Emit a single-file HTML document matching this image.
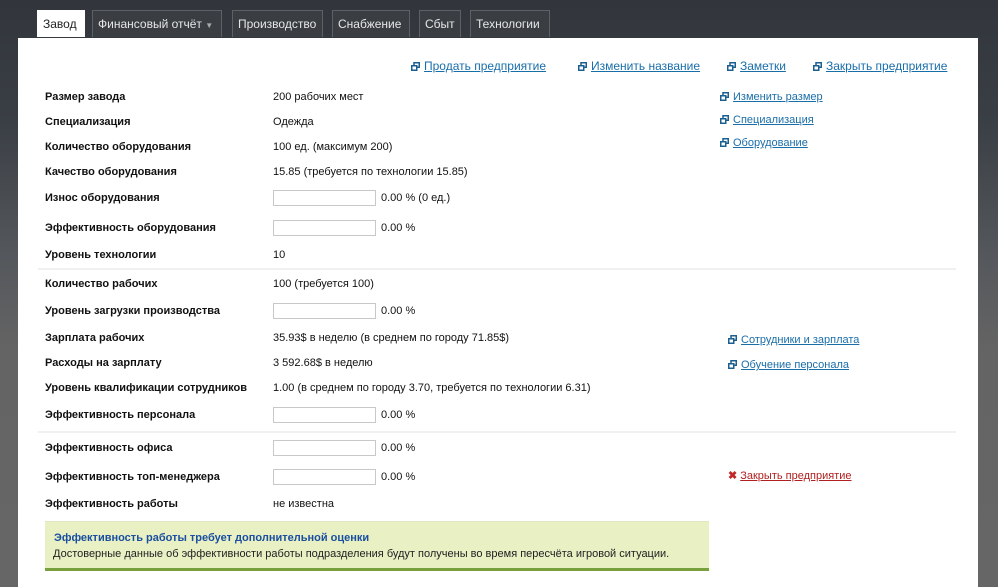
<!DOCTYPE html><html><head><meta charset="utf-8"><style>
html{background:#666}
body{margin:0;width:998px;height:587px;overflow:hidden;background:linear-gradient(#32363c 0,#3a3f45 120px,#55585c 260px,#646464 350px,#666 587px);font-family:"Liberation Sans",sans-serif;font-size:11px;color:#111;position:relative}
.tab{position:absolute;top:10px;height:27px;line-height:27px;border:1px solid #5c6166;border-bottom:none;color:#e6e6e6;font-size:12px;padding:0 5px;box-sizing:border-box;background:#3a3e43}
.tab.a{background:#fff;color:#222;border-color:#fff}
.panel{position:absolute;left:18px;top:38px;width:960px;height:549px;background:#fff}
.t{position:absolute;white-space:nowrap}
.l{font-weight:bold;left:45px}
.v{left:273px}
.in{position:absolute;left:273px;width:103px;height:16px;border:1px solid #c8c8c8;box-sizing:border-box;background:#fff}
a{color:#1a6ea8;text-decoration:underline}
.ic{display:inline-block;width:9px;height:9px;margin-right:4px;vertical-align:-1px}
.sep{position:absolute;left:38px;width:918px;height:2px;background:#f0f0f0}
</style></head><body>
<svg width="0" height="0" style="position:absolute"><symbol id="w" viewBox="0 0 9 9"><rect x="3" y="0.75" width="5.25" height="4.5" fill="none" stroke="#1a5f8f" stroke-width="1.5"/><rect x="0.75" y="3.75" width="5" height="4.5" fill="#fff" stroke="#1a5f8f" stroke-width="1.5"/></symbol></svg>
<div class="tab a" style="left:37px;width:48px">Завод</div>
<div class="tab" style="left:92px;width:130px">Финансовый отчёт <span style="font-size:8px;color:#aaa">▼</span></div>
<div class="tab" style="left:232px;width:91px">Производство</div>
<div class="tab" style="left:332px;width:78px">Снабжение</div>
<div class="tab" style="left:419px;width:42px">Сбыт</div>
<div class="tab" style="left:470px;width:80px">Технологии</div>
<div class="panel"></div>
<div class="t" style="left:411px;top:59px;font-size:12px"><svg class="ic"><use href="#w"/></svg><a>Продать предприятие</a></div>
<div class="t" style="left:578px;top:59px;font-size:12px"><svg class="ic"><use href="#w"/></svg><a>Изменить название</a></div>
<div class="t" style="left:727px;top:59px;font-size:12px"><svg class="ic"><use href="#w"/></svg><a>Заметки</a></div>
<div class="t" style="left:813px;top:59px;font-size:12px"><svg class="ic"><use href="#w"/></svg><a>Закрыть предприятие</a></div>
<div class="t" style="left:720px;top:91px"><svg class="ic"><use href="#w"/></svg><a>Изменить размер</a></div>
<div class="t" style="left:720px;top:114px"><svg class="ic"><use href="#w"/></svg><a>Специализация</a></div>
<div class="t" style="left:720px;top:137px"><svg class="ic"><use href="#w"/></svg><a>Оборудование</a></div>
<div class="t" style="left:728px;top:334px"><svg class="ic"><use href="#w"/></svg><a>Сотрудники и зарплата</a></div>
<div class="t" style="left:728px;top:359px"><svg class="ic"><use href="#w"/></svg><a>Обучение персонала</a></div>
<div class="t" style="left:728px;top:469px"><span style="color:#c0282a;font-weight:bold;margin-right:3px">✖</span><a style="color:#b02020">Закрыть предприятие</a></div>

<div class="t l" style="top:91px">Размер завода</div><div class="t v" style="top:91px">200 рабочих мест</div>
<div class="t l" style="top:116px">Специализация</div><div class="t v" style="top:116px">Одежда</div>
<div class="t l" style="top:141px">Количество оборудования</div><div class="t v" style="top:141px">100 ед. (максимум 200)</div>
<div class="t l" style="top:166px">Качество оборудования</div><div class="t v" style="top:166px">15.85 (требуется по технологии 15.85)</div>
<div class="t l" style="top:192px">Износ оборудования</div><div class="in" style="top:190px"></div><div class="t" style="left:381px;top:192px">0.00 % (0 ед.)</div>
<div class="t l" style="top:222px">Эффективность оборудования</div><div class="in" style="top:220px"></div><div class="t" style="left:381px;top:222px">0.00 %</div>
<div class="t l" style="top:249px">Уровень технологии</div><div class="t v" style="top:249px">10</div>
<div class="sep" style="top:268px"></div>
<div class="t l" style="top:278px">Количество рабочих</div><div class="t v" style="top:278px">100 (требуется 100)</div>
<div class="t l" style="top:305px">Уровень загрузки производства</div><div class="in" style="top:303px"></div><div class="t" style="left:381px;top:305px">0.00 %</div>
<div class="t l" style="top:332px">Зарплата рабочих</div><div class="t v" style="top:332px">35.93$ в неделю (в среднем по городу 71.85$)</div>
<div class="t l" style="top:357px">Расходы на зарплату</div><div class="t v" style="top:357px">3 592.68$ в неделю</div>
<div class="t l" style="top:382px">Уровень квалификации сотрудников</div><div class="t v" style="top:382px">1.00 (в среднем по городу 3.70, требуется по технологии 6.31)</div>
<div class="t l" style="top:409px">Эффективность персонала</div><div class="in" style="top:407px"></div><div class="t" style="left:381px;top:409px">0.00 %</div>
<div class="sep" style="top:431px"></div>
<div class="t l" style="top:442px">Эффективность офиса</div><div class="in" style="top:440px"></div><div class="t" style="left:381px;top:442px">0.00 %</div>
<div class="t l" style="top:471px">Эффективность топ-менеджера</div><div class="in" style="top:469px"></div><div class="t" style="left:381px;top:471px">0.00 %</div>
<div class="t l" style="top:498px">Эффективность работы</div><div class="t v" style="top:498px">не известна</div>
<div style="position:absolute;left:45px;top:521px;width:664px;height:46px;background:#e8f0c4;border-bottom:3px solid #78a03c;border-top:1px solid #dfe8c0"></div>
<div class="t" style="left:54px;top:532px;color:#1a4fa0;font-weight:bold">Эффективность работы требует дополнительной оценки</div>
<div class="t" style="left:53px;top:548px;color:#222">Достоверные данные об эффективности работы подразделения будут получены во время пересчёта игровой ситуации.</div>
</body></html>
